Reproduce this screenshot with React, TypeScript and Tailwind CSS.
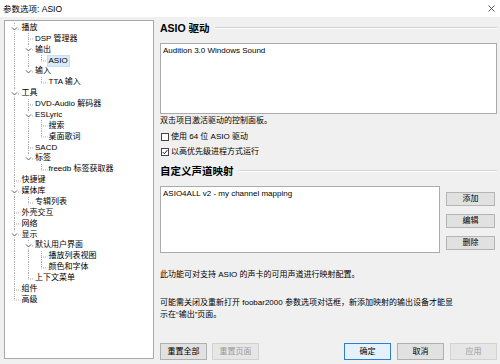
import React from "react";

type Node = { t: string; l: number; c?: boolean; sel?: boolean };

const nodes: Node[] = [
  { t: "播放", l: 0, c: true },
  { t: "DSP 管理器", l: 1 },
  { t: "输出", l: 1, c: true },
  { t: "ASIO", l: 2, sel: true },
  { t: "输入", l: 1, c: true },
  { t: "TTA 输入", l: 2 },
  { t: "工具", l: 0, c: true },
  { t: "DVD-Audio 解码器", l: 1 },
  { t: "ESLyric", l: 1, c: true },
  { t: "搜索", l: 2 },
  { t: "桌面歌词", l: 2 },
  { t: "SACD", l: 1 },
  { t: "标签", l: 1, c: true },
  { t: "freedb 标签获取器", l: 2 },
  { t: "快捷键", l: 0 },
  { t: "媒体库", l: 0, c: true },
  { t: "专辑列表", l: 1 },
  { t: "外壳交互", l: 0 },
  { t: "网络", l: 0 },
  { t: "显示", l: 0, c: true },
  { t: "默认用户界面", l: 1, c: true },
  { t: "播放列表视图", l: 2 },
  { t: "颜色和字体", l: 2 },
  { t: "上下文菜单", l: 1 },
  { t: "组件", l: 0 },
  { t: "高级", l: 0 },
];

function hasNext(i: number): boolean {
  const L = nodes[i].l;
  for (let j = i + 1; j < nodes.length; j++) {
    if (nodes[j].l === L) return true;
    if (nodes[j].l < L) return false;
  }
  return false;
}

function ancestorIndex(i: number, a: number): number {
  for (let j = i; j >= 0; j--) if (nodes[j].l === a) return j;
  return -1;
}

const W = 13.5;
const H = 10.88;
const LINE = "#a8a8a8";

function Cell({ i, col }: { i: number; col: number }) {
  const n = nodes[i];
  const cx = 7;
  const my = H / 2;
  if (col < n.l) {
    const a = ancestorIndex(i, col);
    const show = a >= 0 && hasNext(a);
    return (
      <svg width={W} height={H} className="shrink-0 block">
        {show && <line x1={cx + 0.5} y1={0} x2={cx + 0.5} y2={H} stroke={LINE} strokeDasharray="1 1" />}
      </svg>
    );
  }
  const nx = hasNext(i);
  return (
    <svg width={W} height={H} className="shrink-0 block">
      <line x1={cx + 0.5} y1={0} x2={cx + 0.5} y2={nx ? H : my} stroke={LINE} strokeDasharray="1 1" />
      <line x1={cx} y1={my + 0.5} x2={W} y2={my + 0.5} stroke={LINE} strokeDasharray="1 1" />
      {n.c && (
        <>
          <rect x={cx - 3} y={my - 3} width={7} height={6} fill="#fff" />
          <path d={`M${cx - 2} ${my - 1} L${cx + 0.5} ${my + 1.5} L${cx + 3} ${my - 1}`} fill="none" stroke="#5a5a5a" strokeWidth={1} />
        </>
      )}
    </svg>
  );
}

function Tree() {
  return (
    <div className="mt-[3px] w-[150px] h-[339px] border border-[#a9a9a9] bg-white pt-[1.5px] pl-[2px] shrink-0 overflow-hidden">
      {nodes.map((n, i) => (
        <div key={i} className="flex items-center h-[10.88px]">
          {Array.from({ length: n.l + 1 }).map((_, c) => (
            <Cell key={c} i={i} col={c} />
          ))}
          <span
            className={
              "text-[8px] leading-[10px] whitespace-nowrap px-[1px] " +
              (n.sel ? "bg-[#d9ebfb] outline outline-1 outline-[#c5dff7]" : "")
            }
          >
            {n.t}
          </span>
        </div>
      ))}
    </div>
  );
}

function Header({ text }: { text: string }) {
  return (
    <div className="h-[14px] flex items-center">
      <span className="text-[10.5px] font-bold leading-[14px] whitespace-nowrap">{text}</span>
      <div className="flex-1 ml-[5px] border-t border-[#d3d3d3] border-b border-b-white" />
    </div>
  );
}

function Check({ checked, label }: { checked?: boolean; label: string }) {
  return (
    <div className="h-[10px] flex items-center">
      <div className="w-[8px] h-[8px] ml-[1px] border border-[#444] bg-white flex items-center justify-center">
        {checked && (
          <svg width="6" height="6" viewBox="0 0 6 6">
            <path d="M0.7 3 L2.4 4.8 L5.4 1" fill="none" stroke="#222" strokeWidth="1" />
          </svg>
        )}
      </div>
      <span className="ml-[2px] text-[8px] leading-[10px]">{label}</span>
    </div>
  );
}

function SideBtn({ label }: { label: string }) {
  return (
    <div className="h-[14px] w-[49px] bg-[#e1e1e1] border border-[#b5b5b5] flex items-center justify-center text-[8px] leading-[10px]">
      {label}
    </div>
  );
}

function Btn({ label, kind }: { label: string; kind?: "def" | "dis" }) {
  const cls =
    kind === "def"
      ? "bg-[#e5f1fb] border-[#2a7fd4] text-black"
      : kind === "dis"
      ? "bg-[#e6e6e6] border-[#d2d2d2] text-[#9a9a9a]"
      : "bg-[#e1e1e1] border-[#b0b0b0] text-black";
  return (
    <div className={"h-[17px] w-[47px] border flex items-center justify-center text-[8px] leading-[10px] " + cls}>
      {label}
    </div>
  );
}

export default function App() {
  return (
    <div className="w-[500px] h-[364px] bg-[#f0f0f0] flex flex-col overflow-hidden font-['Liberation_Sans','Noto_Sans_CJK_SC',sans-serif] text-black">
      <div className="h-[17px] bg-white flex items-center justify-between pl-[3px] pr-[5px] shrink-0">
        <span className="text-[8.5px] leading-[10px]">参数选项: ASIO</span>
        <svg width="7" height="7" viewBox="0 0 7 7">
          <path d="M0.5 0.5 L6.5 6.5 M6.5 0.5 L0.5 6.5" stroke="#444" strokeWidth="0.9" />
        </svg>
      </div>
      <div className="flex flex-1 pl-[4px]">
        <Tree />
        <div className="ml-[6px] w-[337px] flex flex-col">
          <div className="mt-[4px]">
            <Header text="ASIO 驱动" />
          </div>
          <div className="mt-[8px] h-[71px] bg-white border border-[#ababab] pt-[2px] pl-[2px]">
            <div className="text-[8px] leading-[10px]">Audition 3.0 Windows Sound</div>
          </div>
          <div className="mt-[2px] text-[8px] leading-[10px]">双击项目激活驱动的控制面板。</div>
          <div className="mt-[6px]">
            <Check label="使用 64 位 ASIO 驱动" />
          </div>
          <div className="mt-[5px]">
            <Check checked label="以高优先级进程方式运行" />
          </div>
          <div className="mt-[7px]">
            <Header text="自定义声道映射" />
          </div>
          <div className="mt-[8px] flex">
            <div className="w-[280px] h-[67px] bg-white border border-[#ababab] pt-[2px] pl-[2px]">
              <div className="text-[8px] leading-[10px]">ASIO4ALL v2 - my channel mapping</div>
            </div>
            <div className="ml-[6px] pt-[6px] flex flex-col gap-[8px]">
              <SideBtn label="添加" />
              <SideBtn label="编辑" />
              <SideBtn label="删除" />
            </div>
          </div>
          <div className="mt-[17px] text-[8px] leading-[10px] whitespace-nowrap">
            此功能可对支持 ASIO 的声卡的可用声道进行映射配置。
          </div>
          <div className="mt-[17px] text-[8px] leading-[12px] whitespace-nowrap">
            可能需关闭及重新打开 foobar2000 参数选项对话框，新添加映射的输出设备才能显
            <br />
            示在“输出”页面。
          </div>
          <div className="mt-[22px] flex">
            <Btn label="重置全部" />
            <div className="ml-[5px]">
              <Btn label="重置页面" kind="dis" />
            </div>
            <div className="flex-1" />
            <Btn label="确定" kind="def" />
            <div className="ml-[6px]">
              <Btn label="取消" />
            </div>
            <div className="ml-[6px]">
              <Btn label="应用" kind="dis" />
            </div>
          </div>
        </div>
      </div>
    </div>
  );
}
